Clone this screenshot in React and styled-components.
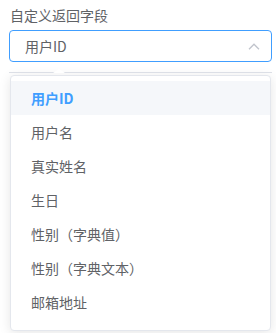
import React from "react";
import styled, { createGlobalStyle } from "styled-components";

const Global = createGlobalStyle`
  body {
    margin: 0;
    background: #fff;
    font-family: "Noto Sans CJK SC", "Noto Sans", sans-serif;
  }
`;

const Page = styled.div`
  padding: 0 4px 0 9px;
  height: 333px;
  overflow: hidden;
`;

const Label = styled.div`
  height: 30px;
  padding: 4px 0 0 1px;
  box-sizing: border-box;
  font-size: 14px;
  line-height: 22px;
  color: #606266;
`;

const Input = styled.div`
  height: 32px;
  box-sizing: border-box;
  border: 1px solid #409eff;
  border-radius: 4px;
  display: flex;
  align-items: center;
  justify-content: space-between;
  padding: 0 11px 0 15px;
  font-size: 14px;
  color: #606266;
`;

const Edge = styled.div`
  position: relative;
  margin-top: 10px;
  height: 1px;
  background: #dcdfe6;

  &::after {
    content: "";
    position: absolute;
    left: 44px;
    top: -3px;
    width: 0;
    height: 0;
    border-left: 6px solid transparent;
    border-right: 6px solid transparent;
    border-bottom: 4px solid #fff;
  }
`;

const Panel = styled.div`
  margin: 2px 1px 0;
  height: 256px;
  box-sizing: border-box;
  overflow: hidden;
  border: 1px solid #e4e7ed;
  border-radius: 4px;
  background: #fff;
  box-shadow: 0 2px 12px rgba(0, 0, 0, 0.1);
  padding: 5px 0;
`;

const Item = styled.div`
  height: 34px;
  line-height: 34px;
  padding: 0 20px;
  font-size: 14px;
  color: ${(p) => (p.selected ? "#409eff" : "#606266")};
  font-weight: ${(p) => (p.selected ? 700 : 400)};
  background: ${(p) => (p.selected ? "#f5f7fa" : "transparent")};
  white-space: nowrap;
`;

const Arrow = () => (
  <svg width="12" height="7" viewBox="0 0 12 7">
    <polyline points="1,6.2 6,1.2 11,6.2" fill="none" stroke="#c0c4cc" strokeWidth="1.3" />
  </svg>
);

const fields = [
  "用户ID",
  "用户名",
  "真实姓名",
  "生日",
  "性别（字典值）",
  "性别（字典文本）",
  "邮箱地址",
  "手机号码",
];

export default function App() {
  return (
    <Page>
      <Global />
      <Label>自定义返回字段</Label>
      <Input>
        <span>用户ID</span>
        <Arrow />
      </Input>
      <Edge />
      <Panel>
        {fields.map((f, i) => (
          <Item key={f} selected={i === 0}>
            {f}
          </Item>
        ))}
      </Panel>
    </Page>
  );
}
